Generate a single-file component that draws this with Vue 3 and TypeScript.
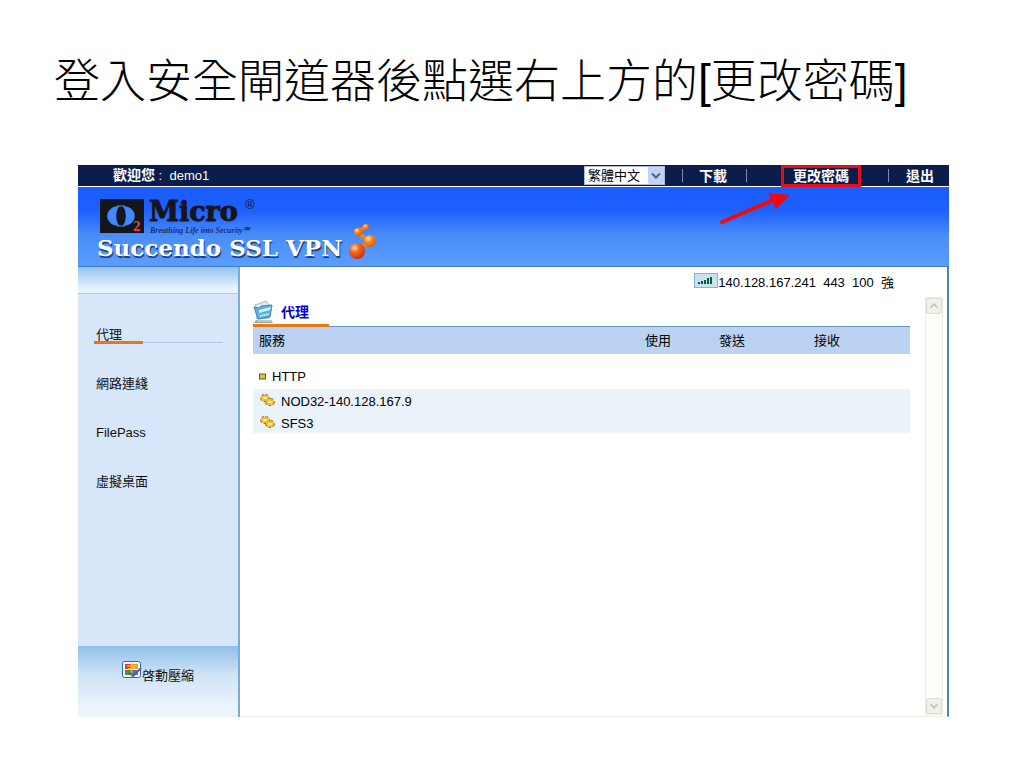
<script setup lang="ts">
import { ref } from 'vue'

interface NavItem {
  id: string
  label: string
}

const navItems: NavItem[] = [
  { id: 'proxy', label: '代理' },
  { id: 'network', label: '網路連綫' },
  { id: 'filepass', label: 'FilePass' },
  { id: 'desktop', label: '虛擬桌面' },
]

const active = ref('proxy')
const language = ref('zh-TW')
const services: string[] = ['NOD32-140.128.167.9', 'SFS3']
</script>

<template>
  <div class="slide">
    <h1 class="title">登入安全閘道器後點選右上方的<span class="bracket">[</span>更改密碼<span class="bracket">]</span></h1>

    <div class="portal">
      <header class="topbar">
        <p class="welcome"><b>歡迎您</b> : &nbsp;demo1</p>
        <div class="tools">
          <div class="lang">
            <select v-model="language" aria-label="語言">
              <option value="zh-TW">繁體中文</option>
            </select>
            <svg class="lang-arrow" viewBox="0 0 16 17" aria-hidden="true">
              <rect width="16" height="17" rx="1" fill="#c3d3f8" />
              <path d="M4 6.5l4 4 4-4" fill="none" stroke="#4d6185" stroke-width="2" />
            </svg>
          </div>
          <span class="sep first"></span>
          <a href="#download">下載</a>
          <span class="sep second"></span>
          <div class="highlight">
            <a href="#password">更改密碼</a>
            <svg class="pointer" viewBox="0 0 74 34" aria-hidden="true">
              <path d="M3 31L54 9" stroke="#ee0a0e" stroke-width="4" stroke-linecap="round" />
              <path d="M49 2L71 4L57 18Z" fill="#ee0a0e" />
            </svg>
          </div>
          <span class="sep third"></span>
          <a href="#logout">退出</a>
        </div>
      </header>

      <div class="banner">
        <svg class="logo" viewBox="0 0 290 74" role="img" aria-label="O2 Micro Succendo SSL VPN">
          <defs>
            <radialGradient id="ball" cx="35%" cy="30%" r="75%">
              <stop offset="0" stop-color="#ffe0a0" />
              <stop offset=".4" stop-color="#ff8a1c" />
              <stop offset="1" stop-color="#d85a08" />
            </radialGradient>
            <radialGradient id="ballred" cx="35%" cy="30%" r="75%">
              <stop offset="0" stop-color="#ffd0a0" />
              <stop offset=".4" stop-color="#f5661c" />
              <stop offset="1" stop-color="#c83008" />
            </radialGradient>
          </defs>
          <rect x="5" y="9" width="44" height="34" fill="#14161c" />
          <path d="M25 16C8 16 8 36 25 36C20 33 20 19 25 16Z" fill="#4189fb" />
          <path d="M27 16C44 16 44 36 27 36C32 33 32 19 27 16Z" fill="#4189fb" />
          <path d="M22 16H30M22 36H30" stroke="#4189fb" stroke-width="1" />
          <text x="38" y="41" class="two">2</text>
          <text x="54" y="31" class="micro">Micro</text>
          <text x="150" y="19" class="reg">®</text>
          <text x="55" y="43" class="tag">Breathing Life into Security℠</text>
          <text x="3" y="68" class="product shade" aria-hidden="true">Succendo SSL VPN</text>
          <text x="2" y="66" class="product">Succendo SSL VPN</text>
          <path d="M271 37L262 42L274 51L262 61" fill="none" stroke="#f08018" stroke-width="4" stroke-linejoin="round" />
          <circle cx="271" cy="37" r="3" fill="url(#ball)" />
          <circle cx="263" cy="42" r="4" fill="url(#ball)" />
          <circle cx="275" cy="51" r="6" fill="url(#ball)" />
          <circle cx="262" cy="61" r="8" fill="url(#ballred)" />
        </svg>
      </div>

      <div class="body">
        <aside class="sidebar">
          <div class="side-cap"></div>
          <nav>
            <ul>
              <li v-for="item in navItems" :key="item.id" :class="{ active: active === item.id }">
                <a :href="'#' + item.id" @click.prevent="active = item.id">{{ item.label }}</a>
              </li>
            </ul>
          </nav>
          <div class="side-foot">
            <button type="button" class="compress">
              <svg viewBox="0 0 20 18" aria-hidden="true">
                <rect x=".5" y=".5" width="18" height="16" rx="2" fill="#f4f8ff" stroke="#3a62b0" />
                <path d="M3 3h6v5H3z" fill="#d93a2e" />
                <path d="M10 3h6v5h-6z" fill="#f0a020" />
                <path d="M3 9h6v5H3z" fill="#48904c" />
                <path d="M10 9h6v5h-6z" fill="#4c78d0" />
                <path d="M5 5h9M6 8l8-1M9.500 2v12" stroke="#ffb52e" stroke-width="1.500" />
                <path d="M7 11l4 4 8-8" fill="none" stroke="#65656d" stroke-width="2" />
              </svg>
              <span>啓動壓縮</span>
            </button>
          </div>
        </aside>

        <main class="main">
          <div class="status">
            <svg viewBox="0 0 24 16" aria-hidden="true">
              <rect x=".5" y=".5" width="23" height="14" fill="#c9e2f3" stroke="#87b4d2" />
              <path d="M4 9h2v2H4zM7 8h2v3H7zM10 7h2v4h-2zM13 5h2v6h-2zM16 4h2v7h-2z" fill="#0b5a38" />
            </svg>
            <span>140.128.167.241 &nbsp;443 &nbsp;100 &nbsp;強</span>
          </div>
          <div class="pane">
            <section class="content">
              <h2>
                <svg viewBox="0 0 22 24" aria-hidden="true">
                  <path d="M2 5L13 1l3 4v13l-12 1z" fill="#e3edf3" stroke="#a5b6c2" />
                  <path d="M1 7l5 1 2-2 11-1-2 12-12 2z" fill="#5fb2e0" stroke="#3a88b5" />
                  <path d="M6 10l12-3-1 3-11 3z" fill="#d3f0fb" />
                  <path d="M7 16l9-2" stroke="#bde6f8" stroke-width="1.500" />
                  <path d="M3 20h15l2 3H1z" fill="#9ba2a8" />
                  <path d="M4 21h14" fill="none" stroke="#e6eaec" />
                </svg>
                <span>代理</span>
              </h2>
              <table>
                <colgroup>
                  <col />
                  <col class="c-use" />
                  <col class="c-send" />
                  <col class="c-recv" />
                </colgroup>
                <thead>
                  <tr>
                    <th scope="col">服務</th>
                    <th scope="col">使用</th>
                    <th scope="col">發送</th>
                    <th scope="col">接收</th>
                  </tr>
                </thead>
                <tbody>
                  <tr class="group">
                    <td colspan="4">
                      <span class="cell">
                        <svg class="bullet" viewBox="0 0 7 7" aria-hidden="true">
                          <rect x=".5" y="1" width="6" height="5" fill="#e0c040" stroke="#6b5a10" />
                        </svg>
                        HTTP
                      </span>
                    </td>
                  </tr>
                  <tr v-for="name in services" :key="name" class="service">
                    <td colspan="4">
                      <span class="cell">
                        <svg class="gear" viewBox="0 0 17 15" aria-hidden="true">
                          <g fill="none" stroke="#a87510" stroke-width="4" stroke-dasharray="2 1">
                            <ellipse cx="6" cy="5" rx="3" ry="2" />
                            <ellipse cx="11" cy="9" rx="3" ry="2" />
                          </g>
                          <g fill="#fff6d8" stroke="#f0c030" stroke-width="2">
                            <ellipse cx="6" cy="5" rx="3" ry="2" />
                            <ellipse cx="11" cy="9" rx="3" ry="2" />
                          </g>
                        </svg>
                        {{ name }}
                      </span>
                    </td>
                  </tr>
                </tbody>
              </table>
            </section>
            <div class="scroller">
              <button type="button" aria-label="向上捲動">
                <svg viewBox="0 0 16 16"><path d="M4 10l4-4 4 4" /></svg>
              </button>
              <button type="button" aria-label="向下捲動">
                <svg viewBox="0 0 16 16"><path d="M4 6l4 4 4-4" /></svg>
              </button>
            </div>
          </div>
        </main>
      </div>
    </div>
  </div>
</template>

<style>
body {
  margin: 0;
  background: #fff;
}
</style>

<style scoped>
* {
  box-sizing: border-box;
}

.slide {
  min-height: 100vh;
  padding: 51px 75px 51px 78px;
  display: flex;
  flex-direction: column;
  font: 13px/16px "Liberation Sans", "Noto Sans CJK TC", sans-serif;
  color: #000;
}

.title {
  margin: 0 0 54px -24px;
  font-size: 46px;
  line-height: 60px;
  font-weight: 300;
  white-space: nowrap;
}

.bracket {
  font-weight: 400;
}

.portal {
  flex: 1;
  display: flex;
  flex-direction: column;
}

.topbar {
  height: 21px;
  display: flex;
  align-items: center;
  justify-content: space-between;
  padding: 0 15px 0 35px;
  background: #0a1d4b;
  color: #fff;
}

.welcome {
  margin: 0;
}

.welcome b,
.tools a {
  font-size: 14px;
}

.tools {
  display: flex;
  align-items: center;
}

.tools a {
  color: #fff;
  font-weight: 700;
  text-decoration: none;
}

.lang {
  position: relative;
  width: 81px;
  height: 19px;
}

.lang select {
  appearance: none;
  width: 100%;
  height: 100%;
  padding: 0 0 0 3px;
  border: 1px solid #a9b9d6;
  border-radius: 0;
  background: #fff;
  color: #000;
  font: inherit;
}

.lang-arrow {
  position: absolute;
  top: 1px;
  right: 1px;
  width: 16px;
  height: 17px;
  pointer-events: none;
}

.sep {
  width: 1px;
  height: 13px;
  background: #7f8cab;
}

.first {
  margin: 0 16px 0 17px;
}

.second {
  margin: 0 34px 0 19px;
}

.third {
  margin: 0 17px 0 27px;
}

.highlight {
  position: relative;
  height: 22px;
  padding: 0 9px;
  border: 3px solid #e60d16;
  line-height: 16px;
}

.pointer {
  position: absolute;
  top: 23px;
  left: -65px;
  width: 74px;
  height: 34px;
  z-index: 1;
}

.banner {
  height: 80px;
  margin-top: 1px;
  padding: 3px 0 0 17px;
  background: linear-gradient(#1a5cff 0%, #1d60fc 30%, #4a8dfa 62%, #5a9dfd 100%);
  border-bottom: 1px solid #3f7cc4;
}

.logo {
  display: block;
  width: 290px;
  height: 74px;
}

.two {
  font: 700 15px "Liberation Serif", serif;
  fill: #ef4048;
}

.micro {
  font: 700 27px "DejaVu Serif", serif;
  fill: #14161c;
  stroke: #14161c;
  stroke-width: 1px;
}

.reg {
  font: 13px "Liberation Sans", sans-serif;
  fill: #14161c;
}

.tag {
  font: italic 700 8px "Liberation Serif", serif;
  fill: #17326e;
}

.product {
  font: 700 23px "DejaVu Serif", serif;
  fill: #fff;
}

.shade {
  fill: #27416f;
}

.body {
  flex: 1;
  display: flex;
}

.sidebar {
  flex: 0 0 162px;
  display: flex;
  flex-direction: column;
  background: #d7e6f8;
  border-right: 2px solid #78acdc;
}

.side-cap {
  height: 27px;
  background: linear-gradient(#93c4ed, #e4f1fc 80%, #e8f2fb);
  border-bottom: 1px solid #b4cadd;
}

nav {
  flex: 1;
  padding-top: 16px;
}

nav ul {
  margin: 0;
  padding: 0;
  list-style: none;
}

nav li {
  position: relative;
  height: 49px;
  padding-left: 18px;
  display: flex;
  align-items: center;
}

nav a {
  color: #111;
  text-decoration: none;
}

nav li.active::before,
nav li.active::after {
  content: "";
  position: absolute;
  left: 16px;
}

nav li.active::before {
  right: 15px;
  bottom: 16px;
  height: 1px;
  background: #b3c9e0;
}

nav li.active::after {
  width: 49px;
  bottom: 15px;
  height: 3px;
  background: #e67817;
}

.side-foot {
  height: 71px;
  padding-top: 15px;
  display: flex;
  justify-content: center;
  align-items: flex-start;
  background: linear-gradient(#8fc0ea, #cfe3f6 40%, #eaf4fb 85%);
}

.compress {
  display: flex;
  align-items: flex-end;
  padding: 0;
  border: 0;
  background: none;
  font: inherit;
  color: #111;
}

.compress svg {
  width: 20px;
  height: 18px;
  margin-bottom: 5px;
}

.main {
  flex: 1;
  display: flex;
  flex-direction: column;
  border-right: 2px solid #5087ad;
  border-bottom: 1px solid #eeeee4;
}

.status {
  height: 30px;
  padding: 2px 53px 0 0;
  display: flex;
  justify-content: flex-end;
  align-items: center;
}

.status svg {
  width: 24px;
  height: 16px;
  margin-bottom: 4px;
}

.pane {
  flex: 1;
  display: flex;
  padding: 0 4px 1px 13px;
}

.content {
  flex: 1;
  margin-right: 15px;
}

h2 {
  position: relative;
  height: 30px;
  margin: 0;
  padding-top: 3px;
  display: flex;
  gap: 6px;
  border-bottom: 1px solid #6795c4;
  font-size: 14px;
  line-height: 24px;
  color: #0000cf;
}

h2 svg {
  width: 22px;
  height: 24px;
}

h2::after {
  content: "";
  position: absolute;
  left: 0;
  bottom: -1px;
  width: 76px;
  height: 3px;
  background: #e87815;
}

table {
  width: 100%;
  border-collapse: collapse;
  table-layout: fixed;
}

.c-use {
  width: 74px;
}

.c-send {
  width: 95px;
}

.c-recv {
  width: 96px;
}

th {
  height: 27px;
  padding: 0;
  background: #bbd2f2;
  font-weight: 400;
  text-align: left;
}

th:first-child {
  padding-left: 6px;
}

td {
  padding: 0 0 0 6px;
}

.group td {
  height: 35px;
  padding-top: 10px;
}

.service td {
  height: 22px;
  padding-top: 4px;
  background: #eaf2fa;
}

.cell {
  display: flex;
  align-items: center;
  gap: 6px;
}

.bullet {
  width: 7px;
  height: 7px;
}

.gear {
  width: 17px;
  height: 15px;
  margin-bottom: 3px;
}

.service .cell {
  gap: 5px;
}

.scroller {
  width: 18px;
  display: flex;
  flex-direction: column;
  justify-content: space-between;
  border: 1px solid #eeeee6;
  background: #fefefb;
}

.scroller button {
  width: 16px;
  height: 16px;
  padding: 0;
  border: 1px solid #dedcd0;
  border-radius: 2px;
  background: #f1f0e9;
}

.scroller svg {
  display: block;
  width: 14px;
  height: 14px;
  fill: none;
  stroke: #c3c1b3;
  stroke-width: 2;
}
</style>
